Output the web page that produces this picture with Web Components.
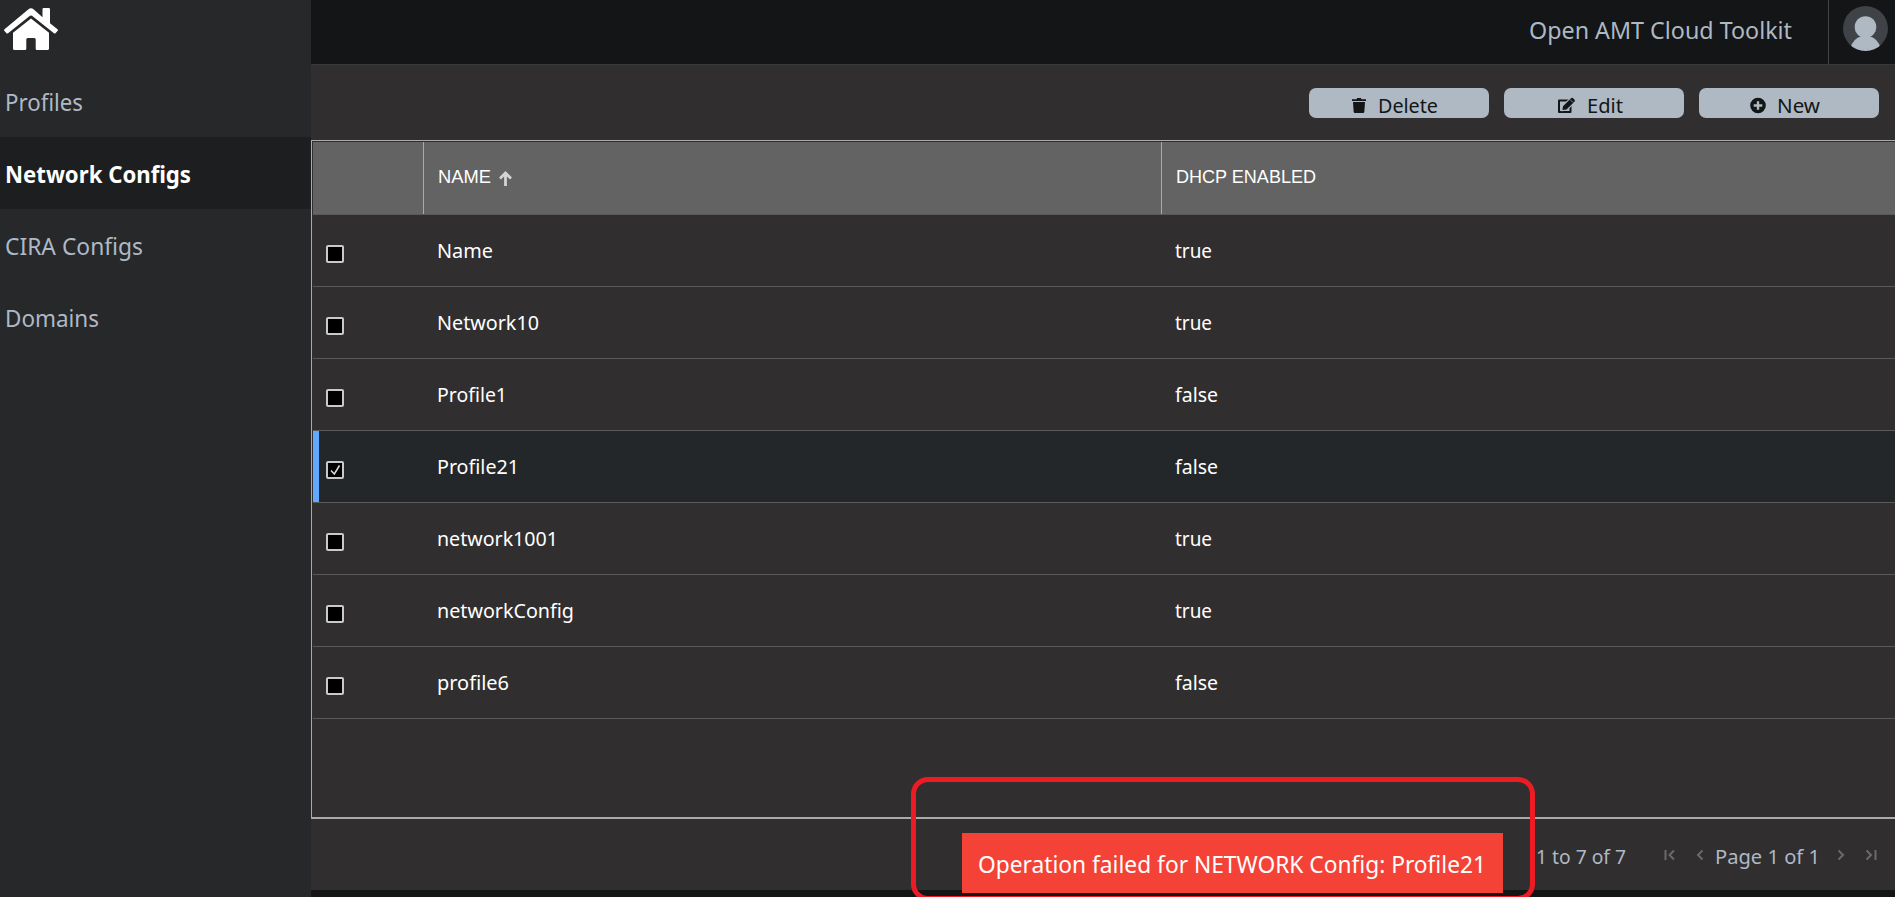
<!DOCTYPE html>
<html lang="en">
<head>
<meta charset="utf-8">
<title>Open AMT Cloud Toolkit</title>
<style>
html,body{margin:0;height:100%;overflow:hidden;background:#131516;font-family:"Noto Sans","Open Sans",sans-serif}
</style>
</head>
<body>
<amt-app></amt-app>
<script>
const define = (name, html, init) => customElements.define(name, class extends HTMLElement {
  connectedCallback() {
    if (this.shadowRoot) return;
    const t = document.createElement('template');
    t.innerHTML = typeof html === 'function' ? html(this) : html;
    this.attachShadow({mode: 'open'}).append(t.content.cloneNode(true));
    if (init) init(this, this.shadowRoot);
  }
});

// A line of text condensed horizontally to the given width
define('fit-text', `<style>
:host{display:block;white-space:nowrap;flex:none}
span{display:inline-block;transform-origin:0 50%;white-space:nowrap}
</style><span><slot></slot></span>`, (el, root) => {
  const w = +el.getAttribute('w'), s = root.querySelector('span');
  const natural = s.getBoundingClientRect().width;
  el.style.width = w + 'px';
  s.style.transform = `scaleX(${w / natural})`;
});

define('home-icon', `<style>:host{display:block;width:54px;height:42px}svg{display:block}</style>
<svg width="54" height="42" viewBox="0 0 54 42" fill="#fff"><path d="M38.500 9.200V1.200Q38.500 0 39.700 0H44.800Q46 0 46 1.200V15.300L53.500 21.300Q54.300 22 53.700 22.800L51.500 25.200Q50.800 25.900 50 25.200L28 7.800Q27 7 26 7.800L4 25.200Q3.200 25.900 2.500 25.200L.3 22.800Q-.3 22 .5 21.300L24.200 1.500Q27 -.8 29.800 1.500Z"/><path d="M27 10.500L45 24.700V40.500Q45 42 43.500 42H33Q31.700 42 31.700 40.700V31.500Q31.700 30 30.200 30H23.800Q22.300 30 22.300 31.500V40.700Q22.300 42 21 42H10.500Q9 42 9 40.500V24.700Z"/></svg>`);

define('nav-item', el => `<style>
:host{display:flex;height:72px;box-sizing:border-box;padding:0 0 0 5px;align-items:center;font-size:24px;line-height:36px;color:#aeb9c7}
:host([active]){background:#1c1e1f;color:#fff;font-weight:700}
fit-text{margin-top:1px}
</style><fit-text w="${el.getAttribute('w')}">${el.getAttribute('label')}</fit-text>`);

define('side-nav', `<style>
:host{display:block;background:#262829;width:311px}
.home{height:65px;box-sizing:border-box;padding:8px 0 0 4px}
</style><div class="home"><home-icon></home-icon></div>
<nav><nav-item label="Profiles" w="78"></nav-item><nav-item active label="Network Configs" w="186"></nav-item><nav-item label="CIRA Configs" w="138"></nav-item><nav-item label="Domains" w="94"></nav-item></nav>`);

define('top-bar', `<style>
:host{display:flex;height:65px;box-sizing:border-box;border-bottom:1px solid #373a3d;background:#131516;justify-content:flex-end;font-size:24px;line-height:36px;color:#aeb9c3}
fit-text{margin:12px 36px 0 0}
.user{width:67px;box-sizing:border-box;border-left:1px solid #3f4246;padding:6px 0 0 14px}
svg{display:block}
</style><fit-text w="263">Open AMT Cloud Toolkit</fit-text>
<div class="user"><svg width="45" height="45" viewBox="0 0 45 45"><defs><clipPath id="c"><circle cx="22.500" cy="22.500" r="22.500"/></clipPath></defs><g clip-path="url(#c)"><rect width="45" height="45" fill="#3f4246"/><circle cx="22.500" cy="21" r="10.800" fill="#aeb9c3"/><path d="M7.500 42Q10 32.500 18.500 30.300V28H26.500V30.300Q35 32.500 37.500 42V46H7.500Z" fill="#aeb9c3"/></g></svg></div>`);

define('action-button', el => {
  const icons = {
    trash: '<path d="M0 1.200H4.400L5.200 0H8.800L9.600 1.200H14V3H0ZM1 4H13L12.300 13.900Q12.200 15 11 15H3Q1.800 15 1.700 13.900Z"/>',
    edit: '<path d="M1 2.500H12.500V14H1Z" fill="none" stroke="#131516" stroke-width="2" stroke-linejoin="round"/><path d="M4.500 12L5 8.300L13 .3Q14.200 -.7 15.300 .4L16.400 1.500Q17.400 2.700 16.400 3.800L8.500 11.600Z" stroke="#aeb9c3" stroke-width="2.200" paint-order="stroke"/><path d="M12 1.500L15.300 4.800" stroke="#aeb9c3" stroke-width=".7"/>',
    plus: '<path fill-rule="evenodd" d="M8 -.3A7.800 7.800 0 1 1 8 15.300A7.800 7.800 0 1 1 8 -.3ZM6.800 3.200V6.300H3.700V8.700H6.800V11.800H9.200V8.700H12.300V6.300H9.200V3.200Z"/>'
  };
  const k = el.getAttribute('icon'), iw = {trash: 14, edit: 17, plus: 16}[k];
  return `<style>
:host{display:flex;width:180px;height:30px;box-sizing:border-box;border-radius:7px;background:#aeb9c3;color:#131516;font-size:20.500px;line-height:30px;padding-left:${el.getAttribute('pad')}px}
svg{display:block;overflow:visible;margin:10px ${el.getAttribute('gap')}px 0 0;flex:none}
fit-text{margin-top:2px}
</style><svg width="${iw}" height="15" fill="#131516">${icons[k]}</svg><fit-text w="${el.getAttribute('w')}">${el.getAttribute('label')}</fit-text>`;
});

define('tool-bar', `<style>:host{display:flex;justify-content:flex-end;gap:15px;height:75px;box-sizing:border-box;padding:23px 16px 0 0}</style>
<action-button icon="trash" label="Delete" w="60" pad="43" gap="12"></action-button>
<action-button icon="edit" label="Edit" w="36" pad="54" gap="12"></action-button>
<action-button icon="plus" label="New" w="43" pad="51" gap="11"></action-button>`);

define('grid-head', `<style>
:host{display:grid;grid-template-columns:110px 738px 1fr;height:73px;box-sizing:border-box;border-bottom:1px solid #5a5a5a;background:#636363;color:#fff;font:18px/24px "Liberation Sans",Arial,sans-serif}
div{display:flex;padding:23px 0 0 14px}
div+div{border-left:1px solid #aaa}
svg{display:block;margin:6px 0 0 8px}
</style><div></div><div><fit-text w="53">NAME</fit-text><svg width="13" height="15" viewBox="0 0 13 15" fill="none" stroke="#d4d4d4" stroke-width="2.800"><path d="M6.500 15V2M1 7.500L6.500 2L12 7.500"/></svg></div><div><fit-text w="140">DHCP ENABLED</fit-text></div>`);

define('grid-row', el => `<style>
:host{display:grid;grid-template-columns:124px 738px 1fr;height:72px;box-sizing:border-box;border-bottom:1px solid #5a5a5a;font-size:20.500px;line-height:30px;color:#fff}
:host([checked]){background:#232729;box-shadow:inset 6px 0 #60a9ff}
i{display:block;box-sizing:border-box;width:18px;height:18px;border:2px solid #c9c9c9;border-radius:2px;background:#000;margin:30px 0 0 13px}
svg{display:block}
fit-text{margin-top:20px}
</style><i>${el.hasAttribute('checked') ? '<svg width="14" height="14" fill="none" stroke="#ddd" stroke-width="1.500"><path d="M3 7.500L6.300 11L11.500 2.500"/></svg>' : ''}</i>
<fit-text w="${el.getAttribute('w')}">${el.getAttribute('name')}</fit-text>
<fit-text w="${el.getAttribute('dhcp') === 'true' ? 37 : 43}">${el.getAttribute('dhcp')}</fit-text>`);

define('data-grid', `<style>
:host{display:block;height:679px;box-sizing:border-box;border:1px solid #aaa;border-right:0;border-bottom-width:2px;padding:1px 0 0 1px}
</style><grid-head></grid-head><slot></slot>`);

define('page-bar', `<style>
:host{display:flex;height:71px;font-size:20.500px;line-height:30px;color:#aeb9c7}
fit-text{margin-top:22px}
svg{display:block;margin-top:30px;fill:none;stroke:#6a6a6a;stroke-width:2;flex:none}
</style>
<fit-text w="90" style="margin-left:1225px">1 to 7 of 7</fit-text>
<svg width="12" height="12" style="margin-left:38px"><path d="M1.500 1V11M10 1.500L5.500 6L10 10.500"/></svg>
<svg width="8" height="12" style="margin-left:20px"><path d="M6.500 1.500L2 6L6.500 10.500"/></svg>
<fit-text w="105" style="margin-left:11px">Page 1 of 1</fit-text>
<svg width="8" height="12" style="margin-left:17px"><path d="M1.500 1.500L6 6L1.500 10.500"/></svg>
<svg width="12" height="12" style="margin-left:20px"><path d="M1.500 1.500L6 6L1.500 10.500M10.500 1V11"/></svg>`);

define('error-toast', `<style>
:host{position:absolute;left:962px;top:833px;width:541px;height:60px;box-sizing:border-box;background:#f44336;color:#fff;font-size:24px;line-height:36px;padding:13px 0 0 16px}
</style><fit-text w="508"><slot></slot></fit-text>`);

define('call-out', `<style>:host{position:absolute;left:911px;top:777px;width:624px;height:124px;box-sizing:border-box;border:5px solid #ed1c24;border-radius:17px}</style>`);

define('amt-app', `<style>
:host{display:grid;grid-template-columns:311px 1fr;height:897px;position:relative;overflow:hidden}
main{background:#312e2f;height:890px}
</style>
<side-nav></side-nav>
<main><top-bar></top-bar><tool-bar></tool-bar>
<data-grid>
<grid-row name="Name" w="56" dhcp="true"></grid-row>
<grid-row name="Network10" w="102" dhcp="true"></grid-row>
<grid-row name="Profile1" w="70" dhcp="false"></grid-row>
<grid-row checked name="Profile21" w="82" dhcp="false"></grid-row>
<grid-row name="network1001" w="121" dhcp="true"></grid-row>
<grid-row name="networkConfig" w="137" dhcp="true"></grid-row>
<grid-row name="profile6" w="72" dhcp="false"></grid-row>
</data-grid>
<page-bar></page-bar></main>
<error-toast>Operation failed for NETWORK Config: Profile21</error-toast>
<call-out></call-out>`);
</script>
</body>
</html>
